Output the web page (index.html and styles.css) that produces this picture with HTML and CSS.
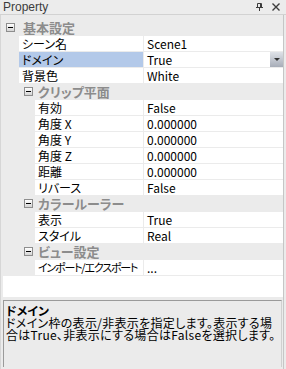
FILE: index.html
```html
<!DOCTYPE html>
<html lang="ja">
<head>
    <meta charset="UTF-8">
    <title>Property</title>
    <link rel="stylesheet" href="styles.css">
</head>
<body>

    <!-- Title Bar -->
    <div class="titlebar">
        <span class="title">Property</span>
        <span class="tools">
            <svg width="7" height="8" viewBox="0 0 7 8">
                <path d="M1.5 0.5h4v4M1.5 0.5v4M0 4.5h7M3.5 4.5v3.5" fill="none" stroke="#3c3c3c" stroke-width="1"/>
                <path d="M4.5 0.5v4" stroke="#3c3c3c" stroke-width="1"/>
            </svg>
            <svg width="8" height="8" viewBox="0 0 8 8">
                <path d="M0.5 0.5l7 7M7.5 0.5l-7 7" stroke="#3c3c3c" stroke-width="1.4"/>
            </svg>
        </span>
    </div>

    <div class="main">
        <!-- Property Grid -->
        <div class="grid">
            <div class="cat"><span class="toggle"></span>基本設定</div>
            <div class="row"><div class="name">シーン名</div><div class="value">Scene1</div></div>
            <div class="row selected">
                <div class="name">ドメイン</div>
                <div class="value">True<span class="dropdown"></span></div>
            </div>
            <div class="row"><div class="name">背景色</div><div class="value">White</div></div>

            <div class="cat sub"><span class="toggle"></span>クリップ平面</div>
            <div class="row sub"><div class="name">有効</div><div class="value">False</div></div>
            <div class="row sub"><div class="name">角度 X</div><div class="value">0.000000</div></div>
            <div class="row sub"><div class="name">角度 Y</div><div class="value">0.000000</div></div>
            <div class="row sub"><div class="name">角度 Z</div><div class="value">0.000000</div></div>
            <div class="row sub"><div class="name">距離</div><div class="value">0.000000</div></div>
            <div class="row sub"><div class="name">リバース</div><div class="value">False</div></div>

            <div class="cat sub"><span class="toggle"></span>カラールーラー</div>
            <div class="row sub"><div class="name">表示</div><div class="value">True</div></div>
            <div class="row sub"><div class="name">スタイル</div><div class="value">Real</div></div>

            <div class="cat sub"><span class="toggle"></span>ビュー設定</div>
            <div class="row sub"><div class="name narrow">インポート/エクスポート</div><div class="value">...</div></div>

            <div class="blank"></div>
        </div>

        <!-- Description Panel -->
        <div class="desc">
            <div class="desc-title">ドメイン</div>
            <div class="desc-text">ドメイン枠の表示/非表示を指定します。表示する場<br>合はTrue、非表示にする場合はFalseを選択します。</div>
        </div>
    </div>

</body>
</html>
```

FILE: styles.css
```css
/* General */
body {
    margin: 0;
    width: 286px;
    height: 369px;
    overflow: hidden;
    background-color: #ebebeb;
    font-family: "Noto Sans CJK JP", "Liberation Sans", sans-serif;
    font-size: 12px;
    font-feature-settings: "palt";
    color: #000;
}

/* Title Bar */
.titlebar {
    height: 14px;
    display: flex;
    justify-content: space-between;
    align-items: center;
    padding: 0 6px 0 3px;
    border-bottom: 1px solid #d2d2d2;
    background-color: #ececec;
}

.titlebar .title {
    font-family: "Liberation Sans", sans-serif;
    font-size: 12px;
    color: #3c3c3c;
    line-height: 14px;
}

.tools {
    display: flex;
    gap: 9px;
    align-items: center;
}

/* Main Area */
.main {
    width: 282px;
    height: 354px;
    border-left: 1px solid #d6d6d6;
    border-right: 1px solid #c6c6c6;
}

.grid {
    padding-top: 5px;
}

/* Category Rows */
.cat {
    height: 15px;
    margin-bottom: 1px;
    display: flex;
    align-items: center;
    padding-left: 5px;
    font-size: 13px;
    font-weight: bold;
    color: #8c8c8c;
    line-height: 15px;
}

.cat .toggle {
    width: 7px;
    height: 7px;
    margin-right: 8px;
    border: 1px solid #8e8e8e;
    background: linear-gradient(#ffffff, #d4d4d4);
    position: relative;
}

.cat .toggle::after {
    content: "";
    position: absolute;
    left: 1px;
    top: 3px;
    width: 5px;
    height: 1px;
    background-color: #000;
}

.cat.sub {
    padding-left: 23px;
}

.cat.sub .toggle {
    margin-right: 5px;
}

/* Property Rows */
.row {
    display: flex;
    height: 15px;
    margin-bottom: 1px;
    padding-left: 18px;
    line-height: 15px;
}

.row.sub {
    padding-left: 34px;
}

.row .name {
    flex: 1;
    background-color: #fff;
    padding-left: 3px;
    white-space: nowrap;
    overflow: hidden;
}

.row .name.narrow {
    font-size: 11px;
    letter-spacing: -1.2px;
}

.row .value {
    width: 136px;
    margin-left: 1px;
    padding-left: 3px;
    background-color: #fff;
    position: relative;
}

.row.selected .name {
    background-color: #b3c9e9;
}

.dropdown {
    position: absolute;
    right: 0;
    top: 0;
    width: 13px;
    height: 15px;
    background: linear-gradient(#dfe2e8, #a7adb8);
}

.dropdown::after {
    content: "";
    position: absolute;
    left: 4px;
    top: 6px;
    border-left: 3px solid transparent;
    border-right: 3px solid transparent;
    border-top: 3px solid #333;
}

.blank {
    height: 21px;
    margin-left: 2px;
    background-color: #fff;
}

/* Description Panel */
.desc {
    margin: 3px 1px 0 2px;
    height: 60px;
    padding: 3px 0 3px 2px;
    border-top: 1px solid #9a9a9a;
    border-left: 1px solid #9a9a9a;
    border-right: 1px solid #d0d0d0;
    line-height: 12px;
}

.desc-title {
    font-weight: bold;
    line-height: 13px;
}

.desc-text {
    white-space: nowrap;
    letter-spacing: 0.3px;
}
```
